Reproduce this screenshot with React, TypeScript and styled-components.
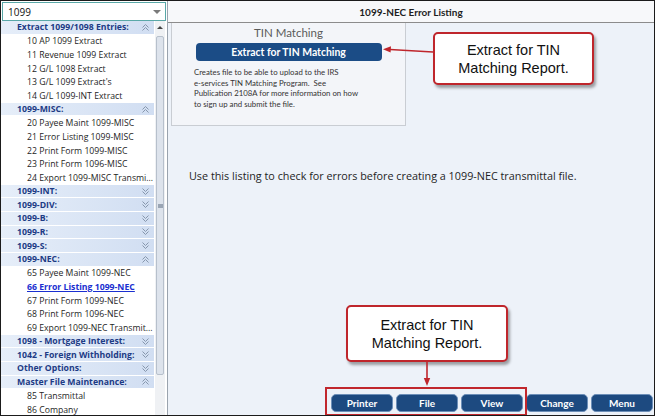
import styled, { createGlobalStyle } from 'styled-components';

const GlobalStyle = createGlobalStyle`
  html, body { margin: 0; padding: 0; background: #ffffff; }
  body { font-family: Lato, "Liberation Sans", sans-serif; }
`;

const Frame = styled.div`
  position: relative;
  width: 655px;
  height: 416px;
  box-sizing: border-box;
  border: 1px solid #1b1b1b;
  display: grid;
  grid-template-columns: 167px 1fr;
  overflow: hidden;
  background: #ffffff;
`;

const Sidebar = styled.div`
  display: flex;
  flex-direction: column;
  border-right: 1px solid #9aa3ae;
  overflow: hidden;
`;

const Combo = styled.div`
  margin: 1px 1px 0 1px;
  height: 19px;
  box-sizing: border-box;
  border: 1px solid #5aa8a8;
  display: flex;
  align-items: center;
  justify-content: space-between;
  padding: 0 4px 0 5px;
  font-family: "Open Sans", sans-serif;
  font-size: 10px;
  color: #111;
`;

const ComboArrow = styled.span`
  width: 0;
  height: 0;
  border-left: 4px solid transparent;
  border-right: 4px solid transparent;
  border-top: 4px solid #7a7a7a;
`;

const ListArea = styled.div`
  flex: 1;
  display: flex;
  gap: 1px;
  overflow: hidden;
`;

const List = styled.div`
  width: 153px;
  display: flex;
  flex-direction: column;
  font-family: "Open Sans", sans-serif;
`;

const GroupRow = styled.div`
  height: 13.65px;
  flex-shrink: 0;
  box-sizing: border-box;
  border-bottom: 1px solid #ffffff;
  display: flex;
  align-items: center;
  justify-content: space-between;
  padding: 0 5px 0 16px;
  background: linear-gradient(to right, #e6eef9, #d1def2);
  font-size: 8.7px;
  font-weight: 700;
  color: #1d3b85;
  white-space: nowrap;
`;

const ItemRow = styled.div<{ $active?: boolean }>`
  height: 13.65px;
  flex-shrink: 0;
  display: flex;
  align-items: center;
  padding-left: 26px;
  font-size: 8.7px;
  white-space: nowrap;
  color: ${p => (p.$active ? '#1a2fd0' : '#1e1e1e')};
  font-weight: ${p => (p.$active ? 700 : 400)};
  text-decoration: ${p => (p.$active ? 'underline' : 'none')};
`;

const ScrollTrack = styled.div`
  width: 10px;
  display: flex;
  flex-direction: column;
  align-items: center;
  background: #eff1f4;
`;

const ScrollUp = styled.div`
  height: 12px;
  display: flex;
  align-items: center;
  justify-content: center;
  &::after {
    content: '';
    border-left: 3px solid transparent;
    border-right: 3px solid transparent;
    border-bottom: 3px solid #444;
  }
`;

const Thumb = styled.div`
  margin-top: 3px;
  width: 8px;
  height: 339px;
  box-sizing: border-box;
  border: 1px solid #b7c0cc;
  border-radius: 2px;
  background: #dde3ec;
  display: flex;
  align-items: center;
  justify-content: center;
  &::after {
    content: '';
    width: 5px;
    height: 4px;
    background: #9aa5b4;
  }
`;

const Main = styled.div`
  display: flex;
  flex-direction: column;
  background: #edf2f9;
`;

const HeaderBar = styled.div`
  height: 21px;
  border-bottom: 1px solid #8c8c8c;
  background: #f7f8fa;
  display: flex;
  align-items: center;
  justify-content: center;
  font-size: 10px;
  font-weight: 700;
  color: #1e1e1e;
`;

const Content = styled.div`
  flex: 1;
  display: flex;
  flex-direction: column;
  padding: 0 0 3px 3px;
`;

const TinBox = styled.div`
  width: 235px;
  height: 103px;
  box-sizing: border-box;
  border: 1px solid #c9cdd3;
  border-top: none;
  background: #f3f5f9;
  display: flex;
  flex-direction: column;
  align-items: center;
`;

const TinTitle = styled.div`
  margin-top: 3px;
  font-size: 11.5px;
  color: #5a5a5a;
`;

const ExtractButton = styled.div`
  margin-top: 4px;
  width: 186px;
  height: 18px;
  border-radius: 4px;
  background: #1b4c86;
  display: flex;
  align-items: center;
  justify-content: center;
  font-size: 10.4px;
  font-weight: 700;
  color: #ffffff;
`;

const TinNote = styled.div`
  align-self: flex-start;
  margin: 6px 0 0 22px;
  font-size: 7.8px;
  line-height: 10.7px;
  color: #333;
  white-space: pre;
`;

const Description = styled.div`
  margin: 42px 0 0 18px;
  font-family: "Open Sans", sans-serif;
  font-size: 10.8px;
  color: #1e1e1e;
`;

const ButtonBar = styled.div`
  margin-top: auto;
  display: flex;
  justify-content: flex-end;
  gap: 3px;
  padding-right: 1px;
`;

const BarButton = styled.div`
  width: 62px;
  height: 18px;
  box-sizing: border-box;
  border: 1px solid #6d8fb8;
  border-radius: 5px;
  background: #1d4a80;
  display: flex;
  align-items: center;
  justify-content: center;
  font-size: 10px;
  font-weight: 700;
  color: #ffffff;
`;

const Callout = styled.div<{ $left: number; $top: number; $w: number; $h: number }>`
  position: absolute;
  left: ${p => p.$left}px;
  top: ${p => p.$top}px;
  width: ${p => p.$w}px;
  height: ${p => p.$h}px;
  box-sizing: border-box;
  border: 2px solid #bf262c;
  border-radius: 5px;
  background: #ffffff;
  box-shadow: 2px 3px 3px rgba(0, 0, 0, 0.35);
  display: flex;
  align-items: center;
  justify-content: center;
  text-align: center;
  font-family: "Liberation Sans", Arial, sans-serif;
  font-size: 14.5px;
  line-height: 18px;
  color: #111;
`;

const Highlight = styled.div`
  position: absolute;
  left: 324px;
  top: 386px;
  width: 202px;
  height: 29px;
  box-sizing: border-box;
  border: 2px solid #c1272d;
`;

const ArrowLayer = styled.svg`
  position: absolute;
  left: 0;
  top: 0;
  pointer-events: none;
`;

const Chevrons = ({ up }: { up: boolean }) => (
  <svg width="7" height="7" viewBox="0 0 7 7">
    <g fill="none" stroke="#8797ad" strokeWidth="1">
      {up ? (
        <>
          <polyline points="0.5,3.5 3.5,0.5 6.5,3.5" />
          <polyline points="0.5,6.5 3.5,3.5 6.5,6.5" />
        </>
      ) : (
        <>
          <polyline points="0.5,0.5 3.5,3.5 6.5,0.5" />
          <polyline points="0.5,3.5 3.5,6.5 6.5,3.5" />
        </>
      )}
    </g>
  </svg>
);

type Entry =
  | { kind: 'group'; label: string; open: boolean }
  | { kind: 'item'; label: string; active?: boolean };

const entries: Entry[] = [
  { kind: 'group', label: 'Extract 1099/1098 Entries:', open: true },
  { kind: 'item', label: '10 AP 1099 Extract' },
  { kind: 'item', label: '11 Revenue 1099 Extract' },
  { kind: 'item', label: '12 G/L 1098 Extract' },
  { kind: 'item', label: "13 G/L 1099 Extract's" },
  { kind: 'item', label: '14 G/L 1099-INT Extract' },
  { kind: 'group', label: '1099-MISC:', open: true },
  { kind: 'item', label: '20 Payee Maint 1099-MISC' },
  { kind: 'item', label: '21 Error Listing 1099-MISC' },
  { kind: 'item', label: '22 Print Form 1099-MISC' },
  { kind: 'item', label: '23 Print Form 1096-MISC' },
  { kind: 'item', label: '24 Export 1099-MISC Transmi...' },
  { kind: 'group', label: '1099-INT:', open: false },
  { kind: 'group', label: '1099-DIV:', open: false },
  { kind: 'group', label: '1099-B:', open: false },
  { kind: 'group', label: '1099-R:', open: false },
  { kind: 'group', label: '1099-S:', open: false },
  { kind: 'group', label: '1099-NEC:', open: true },
  { kind: 'item', label: '65 Payee Maint 1099-NEC' },
  { kind: 'item', label: '66 Error Listing 1099-NEC', active: true },
  { kind: 'item', label: '67 Print Form 1099-NEC' },
  { kind: 'item', label: '68 Print Form 1096-NEC' },
  { kind: 'item', label: '69 Export 1099-NEC Transmit...' },
  { kind: 'group', label: '1098 - Mortgage Interest:', open: false },
  { kind: 'group', label: '1042 - Foreign Withholding:', open: false },
  { kind: 'group', label: 'Other Options:', open: false },
  { kind: 'group', label: 'Master File Maintenance:', open: true },
  { kind: 'item', label: '85 Transmittal' },
  { kind: 'item', label: '86 Company' },
];

const buttons = ['Printer', 'File', 'View', 'Change', 'Menu'];

export default function App() {
  return (
    <>
      <GlobalStyle />
      <Frame>
        <Sidebar>
          <Combo>
            <span>1099</span>
            <ComboArrow />
          </Combo>
          <ListArea>
            <List>
              {entries.map((e, i) =>
                e.kind === 'group' ? (
                  <GroupRow key={i}>
                    <span>{e.label}</span>
                    <Chevrons up={e.open} />
                  </GroupRow>
                ) : (
                  <ItemRow key={i} $active={e.active}>
                    {e.label}
                  </ItemRow>
                )
              )}
            </List>
            <ScrollTrack>
              <ScrollUp />
              <Thumb />
            </ScrollTrack>
          </ListArea>
        </Sidebar>

        <Main>
          <HeaderBar>1099-NEC Error Listing</HeaderBar>
          <Content>
            <TinBox>
              <TinTitle>TIN Matching</TinTitle>
              <ExtractButton>Extract for TIN Matching</ExtractButton>
              <TinNote>
                {'Creates file to be able to upload to the IRS\ne-services TIN Matching Program.  See\nPublication 2108A for more information on how\nto sign up and submit the file.'}
              </TinNote>
            </TinBox>
            <Description>
              Use this listing to check for errors before creating a 1099-NEC transmittal file.
            </Description>
            <ButtonBar>
              {buttons.map(b => (
                <BarButton key={b}>{b}</BarButton>
              ))}
            </ButtonBar>
          </Content>
        </Main>

        <Callout $left={432} $top={31} $w={161} $h={53}>
          Extract for TIN
          <br />
          Matching Report.
        </Callout>
        <Callout $left={345} $top={304} $w={162} $h={57}>
          Extract for TIN
          <br />
          Matching Report.
        </Callout>
        <Highlight />

        <ArrowLayer width="655" height="416" viewBox="0 0 655 416">
          <g stroke="#bf262c" strokeWidth="1.6" fill="#bf262c">
            <line x1="432" y1="51" x2="389" y2="48.5" />
            <polygon points="382,48.2 390,45.2 389.6,51.6" stroke="none" />
            <line x1="426" y1="361" x2="426" y2="378" />
            <polygon points="426,385 422.8,377 429.2,377" stroke="none" />
          </g>
        </ArrowLayer>
      </Frame>
    </>
  );
}
